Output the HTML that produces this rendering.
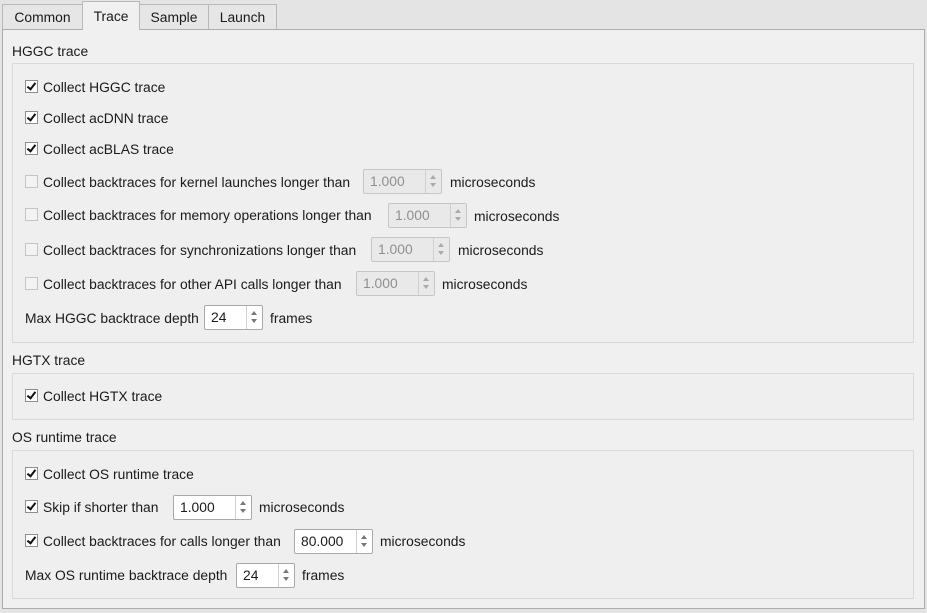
<!DOCTYPE html>
<html><head><style>
body{margin:0;width:927px;height:613px;background:#e4e4e4;font-family:"Liberation Sans",sans-serif;font-size:13.85px;color:#1a1a1a;position:relative;overflow:hidden}
.tab{position:absolute;top:4px;height:25px;border:1px solid #b9b9b9;border-bottom:none;background:#e6e6e6;box-sizing:border-box;text-align:center;line-height:25px}
.pane{position:absolute;left:2px;top:29px;width:923px;height:580px;border:1px solid #adadad;box-sizing:border-box;background:#f0f0f0}
.box{position:absolute;left:12px;width:902px;border:1px solid #d9d9d9;box-sizing:border-box;background:#efefef}
.lbl{position:absolute;line-height:18px;white-space:nowrap;margin-top:0px}
.cb{position:absolute;left:25px;width:13px;height:13px;border:1px solid #8e8e8e;box-sizing:border-box;background:#fff}
.cb.off{border-color:#c4c4c4;background:#f3f3f3}
.cb.on::after{content:"";position:absolute;left:3px;top:0px;width:3px;height:7px;border:solid #111;border-width:0 2px 2px 0;transform:rotate(38deg)}
.sp{position:absolute;height:25px;border:1px solid #a9a9a9;box-sizing:border-box;background:#fff;border-radius:2px;line-height:23px;padding-left:6px}
.sp.dis{background:#e9e9e9;color:#8f8f8f;border-color:#c6c6c6}
.sp .ar{position:absolute;right:0;top:0;width:15px;height:23px;border-left:1px solid #d0d0d0}
.sp .ar::before{content:"";position:absolute;left:4px;top:5px;border:3.5px solid transparent;border-bottom:4px solid #777;border-top:none}
.sp .ar::after{content:"";position:absolute;left:4px;top:13px;border:3.5px solid transparent;border-top:4px solid #777;border-bottom:none}
.sp.dis .ar::before{border-bottom-color:#aaa}.sp.dis .ar::after{border-top-color:#aaa}
</style></head><body>
<div class="pane"></div>
<div class="tab" style="left:2px;width:81px">Common</div>
<div class="tab" style="left:82px;top:1px;height:29px;width:58px;background:#f0f0f0;line-height:29px;z-index:2">Trace</div>
<div class="tab" style="left:139px;width:70px">Sample</div>
<div class="tab" style="left:208px;width:69px">Launch</div>

<div class="lbl" style="left:12px;top:42px">HGGC trace</div>
<div class="box" style="top:63px;height:280px"></div>
<div class="cb on" style="top:80px"></div><div class="lbl" style="left:43px;top:78px">Collect HGGC trace</div>
<div class="cb on" style="top:111px"></div><div class="lbl" style="left:43px;top:109px">Collect acDNN trace</div>
<div class="cb on" style="top:142px"></div><div class="lbl" style="left:43px;top:140px">Collect acBLAS trace</div>
<div class="cb off" style="top:175px"></div><div class="lbl" style="left:43px;top:173px">Collect backtraces for kernel launches longer than</div>
<div class="sp dis" style="left:363px;top:169px;width:79px">1.000<div class="ar"></div></div><div class="lbl" style="left:450px;top:173px">microseconds</div>
<div class="cb off" style="top:208px"></div><div class="lbl" style="left:43px;top:206px">Collect backtraces for memory operations longer than</div>
<div class="sp dis" style="left:388px;top:203px;width:79px">1.000<div class="ar"></div></div><div class="lbl" style="left:474px;top:207px">microseconds</div>
<div class="cb off" style="top:243px"></div><div class="lbl" style="left:43px;top:241px">Collect backtraces for synchronizations longer than</div>
<div class="sp dis" style="left:371px;top:237px;width:79px">1.000<div class="ar"></div></div><div class="lbl" style="left:458px;top:241px">microseconds</div>
<div class="cb off" style="top:277px"></div><div class="lbl" style="left:43px;top:275px">Collect backtraces for other API calls longer than</div>
<div class="sp dis" style="left:356px;top:271px;width:79px">1.000<div class="ar"></div></div><div class="lbl" style="left:442px;top:275px">microseconds</div>
<div class="lbl" style="left:25px;top:309px">Max HGGC backtrace depth</div>
<div class="sp" style="left:204px;top:305px;width:59px">24<div class="ar"></div></div><div class="lbl" style="left:270px;top:309px">frames</div>

<div class="lbl" style="left:12px;top:351px">HGTX trace</div>
<div class="box" style="top:373px;height:47px"></div>
<div class="cb on" style="top:389px"></div><div class="lbl" style="left:43px;top:387px">Collect HGTX trace</div>

<div class="lbl" style="left:12px;top:428px">OS runtime trace</div>
<div class="box" style="top:450px;height:149px"></div>
<div class="cb on" style="top:467px"></div><div class="lbl" style="left:43px;top:465px">Collect OS runtime trace</div>
<div class="cb on" style="top:500px"></div><div class="lbl" style="left:43px;top:498px">Skip if shorter than</div>
<div class="sp" style="left:173px;top:495px;width:79px">1.000<div class="ar"></div></div><div class="lbl" style="left:259px;top:498px">microseconds</div>
<div class="cb on" style="top:534px"></div><div class="lbl" style="left:43px;top:532px">Collect backtraces for calls longer than</div>
<div class="sp" style="left:294px;top:529px;width:79px">80.000<div class="ar"></div></div><div class="lbl" style="left:380px;top:532px">microseconds</div>
<div class="lbl" style="left:25px;top:566px">Max OS runtime backtrace depth</div>
<div class="sp" style="left:236px;top:563px;width:59px">24<div class="ar"></div></div><div class="lbl" style="left:302px;top:566px">frames</div>
</body></html>
